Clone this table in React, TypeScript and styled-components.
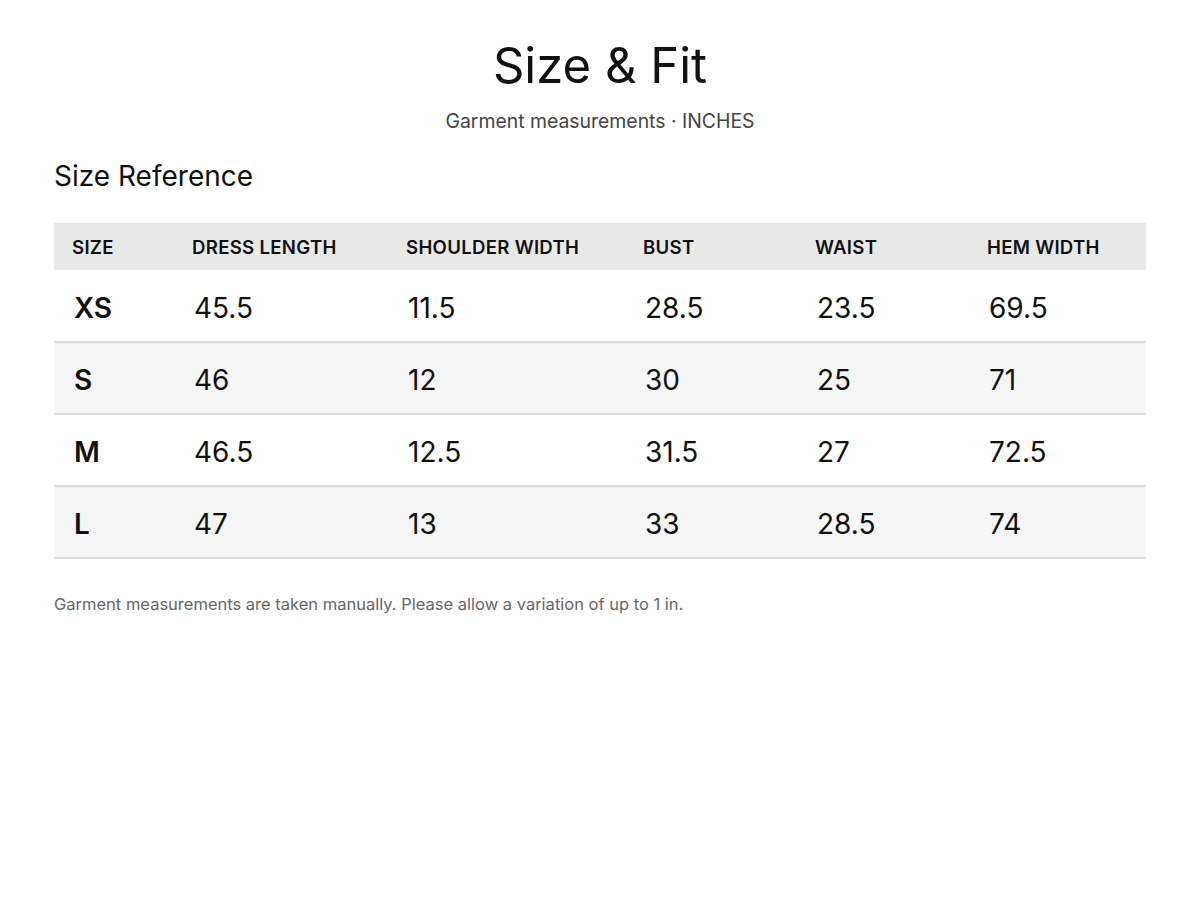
import React from "react";
import styled, { createGlobalStyle } from "styled-components";

const Global = createGlobalStyle`
  html, body { margin: 0; padding: 0; background: #fff; }
  body { font-family: Inter, "Noto Sans", sans-serif; color: #111; }
  *, *::before, *::after { box-sizing: border-box; }
`;

const Page = styled.main`
  padding: 36px 54px 40px;
  display: flex;
  flex-direction: column;
`;

const Header = styled.header`
  display: flex;
  flex-direction: column;
  align-items: center;
  gap: 12px;
`;

const Title = styled.h1`
  margin: 0;
  font-size: 49px;
  font-weight: 400;
  line-height: 60px;
  color: #111;
`;

const Subtitle = styled.p`
  margin: 0;
  font-size: 19.4px;
  line-height: 26px;
  color: #444;
`;

const SectionTitle = styled.h2`
  margin: 23px 0 28px;
  font-size: 28px;
  font-weight: 400;
  line-height: 38px;
  color: #111;
`;

const Table = styled.table`
  width: 100%;
  border-collapse: collapse;
  table-layout: fixed;
`;

const HeadCell = styled.th<{ $w: number }>`
  width: ${(p) => p.$w}px;
  text-align: left;
  background: #e8e8e8;
  padding: 1px 18px 0;
  height: 47px;
  font-size: 18.6px;
  font-weight: 600;
  letter-spacing: 0.3px;
  color: #111;
  text-transform: uppercase;
  white-space: nowrap;
`;

const Row = styled.tr<{ $alt: boolean }>`
  background: ${(p) => (p.$alt ? "#f5f5f5" : "#fff")};
  border-bottom: 2px solid #dcdcdc;
`;

const Cell = styled.td<{ $strong?: boolean }>`
  padding: 4px 20px 0;
  height: 72px;
  font-size: 28px;
  font-weight: ${(p) => (p.$strong ? 600 : 400)};
  color: #111;
`;

const Note = styled.p`
  margin: 35px 0 0;
  font-size: 16.5px;
  color: #666;
`;

const cols = [
  { label: "Size", w: 120 },
  { label: "Dress Length", w: 214 },
  { label: "Shoulder Width", w: 237 },
  { label: "Bust", w: 172 },
  { label: "Waist", w: 172 },
  { label: "Hem Width", w: 177 },
];

const rows = [
  ["XS", "45.5", "11.5", "28.5", "23.5", "69.5"],
  ["S", "46", "12", "30", "25", "71"],
  ["M", "46.5", "12.5", "31.5", "27", "72.5"],
  ["L", "47", "13", "33", "28.5", "74"],
];

export default function App() {
  return (
    <>
      <Global />
      <Page>
        <Header>
          <Title>Size &amp; Fit</Title>
          <Subtitle>Garment measurements · INCHES</Subtitle>
        </Header>
        <SectionTitle>Size Reference</SectionTitle>
        <Table>
          <thead>
            <tr>
              {cols.map((c) => (
                <HeadCell key={c.label} $w={c.w}>
                  {c.label}
                </HeadCell>
              ))}
            </tr>
          </thead>
          <tbody>
            {rows.map((r, i) => (
              <Row key={r[0]} $alt={i % 2 === 1}>
                {r.map((v, j) => (
                  <Cell key={j} $strong={j === 0}>
                    {v}
                  </Cell>
                ))}
              </Row>
            ))}
          </tbody>
        </Table>
        <Note>Garment measurements are taken manually. Please allow a variation of up to 1 in.</Note>
      </Page>
    </>
  );
}
